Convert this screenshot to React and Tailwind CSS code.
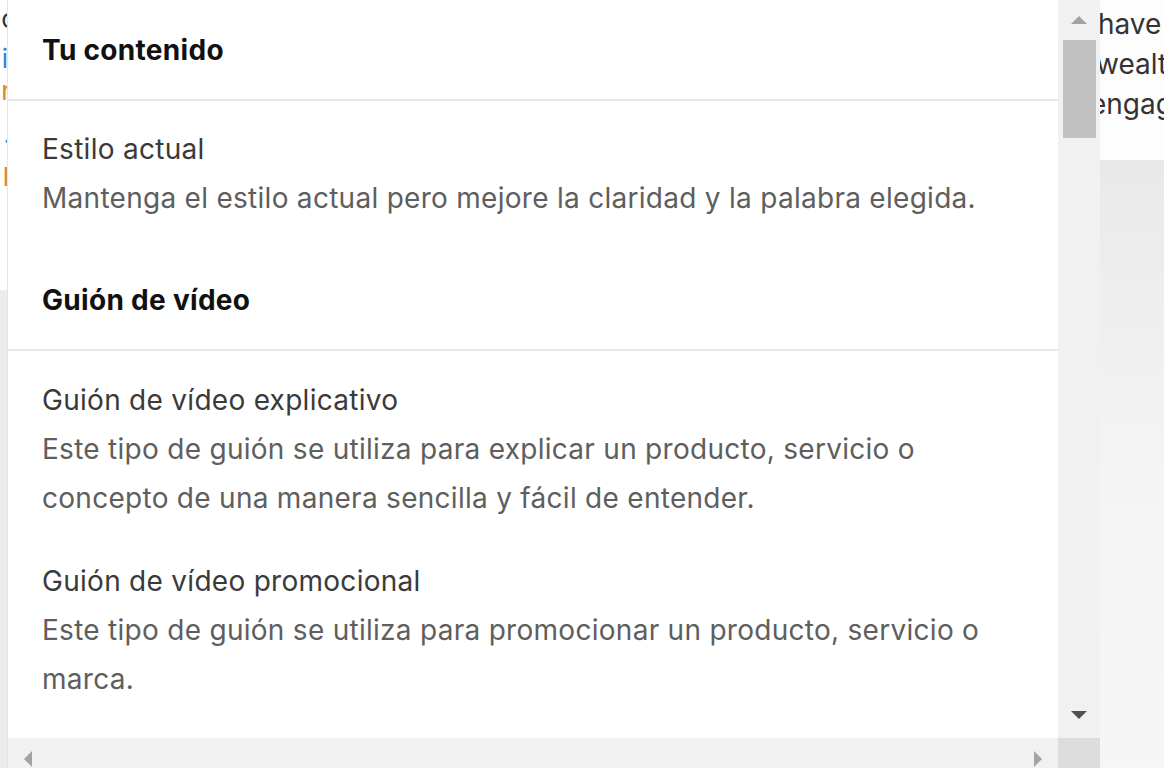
import React from "react";

const font = { fontFamily: "Inter, 'Noto Sans', sans-serif" };

function Heading({ children }) {
  return (
    <div className="h-[101px] flex items-center pl-[34px] border-b-2 border-[#e6e6eb] text-[28px] leading-[48px] font-bold tracking-[0.3px] text-[#111]">
      {children}
    </div>
  );
}

function Item({ title, lines }) {
  return (
    <div className="pl-[34px] py-[17px] tracking-[0.28px]">
      <div className="text-[28px] leading-[49px] text-[#3a3a3a]">{title}</div>
      {lines.map((l, i) => (
        <div key={i} className="text-[28px] leading-[49px] text-[#5e5e5e]">
          {l}
        </div>
      ))}
    </div>
  );
}

export default function App() {
  return (
    <div className="w-[1164px] h-[768px] overflow-hidden flex bg-white" style={font}>
      {/* left sliver of underlying page */}
      <div className="w-[8px] h-full flex flex-col border-r border-[#e4e4e4] bg-[#fafafa] overflow-hidden">
        <div className="h-[290px] bg-white flex flex-col items-end text-[26px] leading-[38px] whitespace-nowrap">
          <div className="h-[40px] text-[#333] -mr-[9px]">c</div>
          <div className="h-[32px] text-[#2f7fd6] -mr-[1px]">i</div>
          <div className="h-[50px] text-[#d9892a] -mr-[4px]">r</div>
          <div className="h-[36px] text-[#2f8fe0] -mr-[4px]">·</div>
          <div className="h-[40px] text-[#d9892a] -mr-[2px]">l</div>
        </div>
        <div className="flex-1 bg-[#ececec]" />
      </div>

      {/* dropdown panel + scrollbars */}
      <div className="w-[1092px] h-full flex flex-col">
        <div className="h-[740px] flex">
          <div className="w-[1050px] h-full bg-white overflow-hidden">
            <Heading>Tu contenido</Heading>
            <div className="pt-[7px] pb-[10px]">
              <Item
                title="Estilo actual"
                lines={["Mantenga el estilo actual pero mejore la claridad y la palabra elegida."]}
              />
            </div>
            <Heading>Guión de vídeo</Heading>
            <div className="pt-[8px] pb-[7px]">
              <Item
                title="Guión de vídeo explicativo"
                lines={[
                  "Este tipo de guión se utiliza para explicar un producto, servicio o",
                  "concepto de una manera sencilla y fácil de entender.",
                ]}
              />
              <Item
                title="Guión de vídeo promocional"
                lines={[
                  "Este tipo de guión se utiliza para promocionar un producto, servicio o",
                  "marca.",
                ]}
              />
            </div>
          </div>
          {/* vertical scrollbar */}
          <div className="w-[42px] h-full bg-[#f1f1f1] flex flex-col items-center">
            <div className="h-[40px] w-full flex items-center justify-center">
              <svg width="18" height="10" viewBox="0 0 18 10">
                <polygon points="9,1 17,9 1,9" fill="#a3a3a3" />
              </svg>
            </div>
            <div className="w-[33px] h-[98px] bg-[#c1c1c1]" />
            <div className="flex-1" />
            <div className="h-[40px] w-full flex items-start justify-center pt-[12px]">
              <svg width="18" height="10" viewBox="0 0 18 10">
                <polygon points="1,1 17,1 9,9" fill="#505050" />
              </svg>
            </div>
          </div>
        </div>
        {/* horizontal scrollbar */}
        <div className="flex-1 flex">
          <div className="w-[1050px] bg-[#f1f1f1] flex items-center justify-between px-[15px] pt-[12px]">
            <svg width="10" height="18" viewBox="0 0 10 18">
              <polygon points="1,9 9,1 9,17" fill="#a3a3a3" />
            </svg>
            <svg width="10" height="18" viewBox="0 0 10 18">
              <polygon points="9,9 1,1 1,17" fill="#a3a3a3" />
            </svg>
          </div>
          <div className="w-[42px] bg-[#dcdcdc]" />
        </div>
      </div>

      {/* right sliver of underlying page */}
      <div className="w-[64px] h-full flex flex-col overflow-hidden">
        <div className="h-[160px] bg-[#fdfdfd] pt-[4px] text-[28px] leading-[40px] text-[#333] whitespace-nowrap">
          <div className="-ml-[2px]">have</div>
          <div className="-ml-[4px]">wealth</div>
          <div className="-ml-[10px]">engage</div>
        </div>
        <div className="flex-1 bg-gradient-to-b from-[#e9e9e9] via-[#f4f4f4] to-[#f6f6f6]" />
      </div>
    </div>
  );
}
